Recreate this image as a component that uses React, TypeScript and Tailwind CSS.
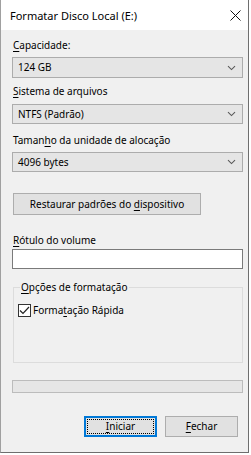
import React from 'react';

const font = { fontFamily: '"Noto Sans", "Segoe UI", sans-serif' };

const Chevron = () => (
  <svg width="9" height="6" viewBox="0 0 9 6" className="mr-[6px] shrink-0">
    <path d="M1 1.2 L4.5 4.6 L8 1.2" fill="none" stroke="#5a5a5a" strokeWidth="1.1" />
  </svg>
);

const Combo = ({ value, className }: { value: string; className: string }) => (
  <div
    className={`flex items-center justify-between border border-[#acacac] bg-[#e5e5e5] pl-[5px] text-[10px] text-black ${className}`}
  >
    <span>{value}</span>
    <Chevron />
  </div>
);

const Label = ({ pre, acc, post, className }: { pre: string; acc: string; post: string; className: string }) => (
  <div className={`h-[15px] leading-[15px] text-[10px] text-black ${className}`}>
    {pre}
    <span className="underline underline-offset-[1.5px]">{acc}</span>
    {post}
  </div>
);

export default function App() {
  return (
    <div className="w-[251px] h-[455px] bg-white" style={font}>
      <div className="flex flex-col w-[249px] h-[453px] border border-t-0 border-l-[#a0a0a0] border-r-[#6e6e6e] border-b-[#6e6e6e]">
        {/* title bar */}
        <div className="flex items-center justify-between h-[30px] bg-white pl-[9px] pr-[7px]">
          <span className="text-[11px] text-black leading-[15px]">Formatar Disco Local (E:)</span>
          <svg width="11" height="11" viewBox="0 0 11 11">
            <path d="M0.5 0.5 L10.5 10.5 M10.5 0.5 L0.5 10.5" stroke="#111" strokeWidth="1" />
          </svg>
        </div>

        {/* body */}
        <div className="flex flex-1 flex-col bg-[#f0f0f0] pl-[11px] pr-[5px] pt-[8px]">
          <Label pre="" acc="C" post="apacidade:" className="ml-[1px]" />
          <Combo value="124 GB" className="mt-[4px] h-[21px]" />

          <Label pre="" acc="S" post="istema de arquivos" className="mt-[6px] ml-[1px]" />
          <Combo value="NTFS (Padrão)" className="mt-[5px] h-[20px]" />

          <Label pre="Taman" acc="h" post="o da unidade de alocação" className="mt-[9px] ml-[1px]" />
          <Combo value="4096 bytes" className="mt-[4px] h-[20px]" />

          <button className="mt-[21px] ml-[1px] h-[22px] w-[188px] border border-[#adadad] bg-[#e1e1e1] text-[10px] text-black">
            Restaurar padrões do <span className="underline underline-offset-[1.5px]">d</span>ispositivo
          </button>

          <Label pre="" acc="R" post="ótulo do volume" className="mt-[18px] ml-[1px]" />
          <div className="mt-[1px] h-[20px] border border-[#7a7a7a] bg-white" />

          <fieldset className="mt-[11px] ml-[1px] h-[83px] border border-[#dcdcdc] px-[4px]">
            <legend className="ml-[2px] px-[1px] text-[10px] leading-[15px] text-black">
              <span className="underline underline-offset-[1.5px]">O</span>pções de formatação
            </legend>
            <div className="mt-[8px] flex items-center">
              <div className="flex h-[13px] w-[13px] items-center justify-center border border-[#333] bg-white">
                <svg width="11" height="9" viewBox="0 0 11 9">
                  <path d="M1 4.5 L4 7.5 L10 1" fill="none" stroke="#222" strokeWidth="1.2" />
                </svg>
              </div>
              <span className="ml-[2px] text-[10px] leading-[15px] text-black">
                Forma<span className="underline underline-offset-[1.5px]">t</span>ação Rápida
              </span>
            </div>
          </fieldset>

          <div className="mt-[17px] h-[13px] border border-[#bcbcbc] bg-[#e6e6e6]" />

          <div className="mt-[23px] mr-[5px] flex justify-end gap-[8px]">
            <button className="flex h-[21px] w-[73px] items-center justify-center border-2 border-[#0078d7] bg-[#e1e1e1] p-[1px]">
              <span className="flex h-full w-full items-center justify-center border border-dotted border-black text-[10px] text-black">
                <span className="underline underline-offset-[1.5px]">I</span>niciar
              </span>
            </button>
            <button className="h-[21px] w-[73px] border border-[#adadad] bg-[#e1e1e1] text-[10px] text-black">
              <span className="underline underline-offset-[1.5px]">F</span>echar
            </button>
          </div>
        </div>
      </div>
    </div>
  );
}
